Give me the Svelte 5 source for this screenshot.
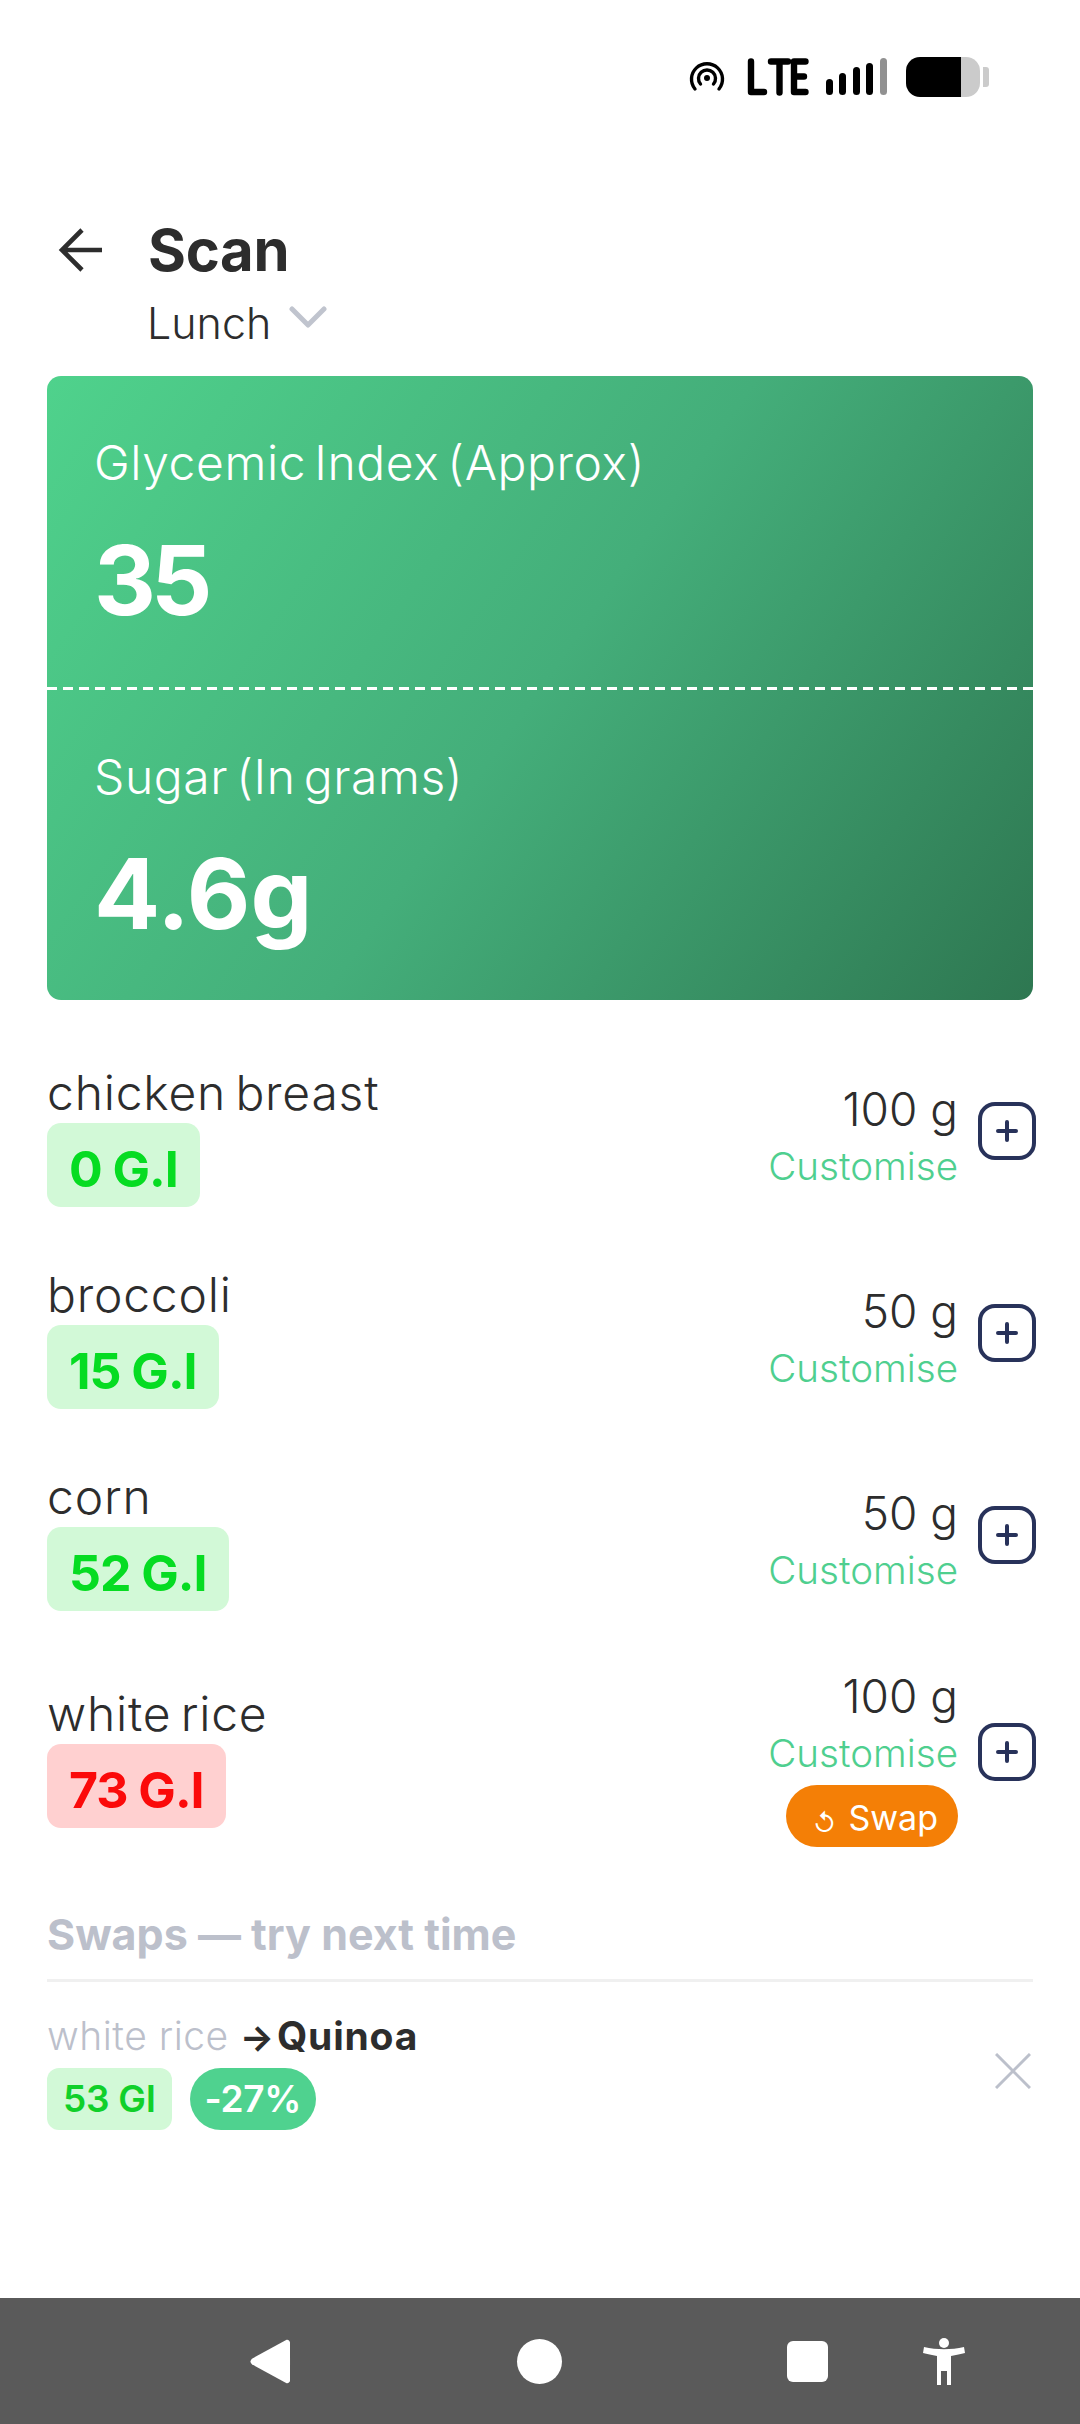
<script lang="ts">
  const foods = [
    { name: "chicken breast", gi: 0, amount: "100 g", high: false, swap: false },
    { name: "broccoli", gi: 15, amount: "50 g", high: false, swap: false },
    { name: "corn", gi: 52, amount: "50 g", high: false, swap: false },
    { name: "white rice", gi: 73, amount: "100 g", high: true, swap: true },
  ];
</script>

<div class="screen">
  <div class="status">
    <svg class="hotspot" width="36" height="32" viewBox="0 0 36 32" fill="none" stroke="#000" stroke-width="3.4" stroke-linecap="round">
      <path d="M6 28 A15.5 15.5 0 1 1 30 28" />
      <path d="M11.5 23 A8.5 8.5 0 1 1 24.5 23" />
      <circle cx="18" cy="17" r="3" fill="#000" stroke="none" />
    </svg>
    <svg class="lte" width="62" height="38" viewBox="0 0 62 38" fill="none" stroke="#000" stroke-width="6.4" stroke-linecap="round" stroke-linejoin="round">
      <path d="M4 3.5 V34 H17" />
      <path d="M24 3.5 H41 M32.5 3.5 V34.5" />
      <path d="M58.5 3.5 H47 V34 H58.5 M47 18.5 H57" />
    </svg>
    <svg class="signal" width="62" height="38" viewBox="0 0 62 38">
      <rect x="0" y="21" width="7" height="16" rx="3.5" fill="#000" />
      <rect x="13" y="15" width="7" height="22" rx="3.5" fill="#000" />
      <rect x="27" y="9" width="7" height="28" rx="3.5" fill="#000" />
      <rect x="40" y="5" width="7" height="32" rx="3.5" fill="#000" />
      <rect x="54" y="0" width="7" height="37" rx="3.5" fill="#919191" />
    </svg>
    <div class="battery">
      <div class="level"></div>
      <div class="rest"></div>
      <div class="nub"></div>
    </div>
  </div>

  <header>
    <svg class="back" width="44" height="44" viewBox="0 0 44 44" fill="none" stroke="#2d2d2d" stroke-width="4.6">
      <path d="M45 22 H4 M24 2 L4 22 L24 42" />
    </svg>
    <div class="titles">
      <h1>Scan</h1>
      <div class="meal">
        <span>Lunch</span>
        <svg width="38" height="22" viewBox="0 0 38 22" fill="none" stroke="#c0c4ce" stroke-width="5" stroke-linecap="round" stroke-linejoin="round">
          <path d="M3 3 L19 19 L35 3" />
        </svg>
      </div>
    </div>
  </header>

  <section class="card">
    <div class="stat first">
      <p>Glycemic Index (Approx)</p>
      <strong>35</strong>
    </div>
    <div class="dashes"></div>
    <div class="stat">
      <p>Sugar (In grams)</p>
      <strong>4.6g</strong>
    </div>
  </section>

  <div class="foods">
    {#each foods as food (food.name)}
      <div class="food">
        <div class="left">
          <div class="name">{food.name}</div>
          <div class="gi" class:high={food.high}>{food.gi} G.I</div>
        </div>
        <div class="right">
          <div class="amount">{food.amount}</div>
          <div class="customise">Customise</div>
          {#if food.swap}
            <div class="swap"><span class="swap-icon">↺</span> Swap</div>
          {/if}
        </div>
        <svg class="plus" width="58" height="58" viewBox="0 0 58 58" fill="none" stroke="#28325a" stroke-width="4" stroke-linecap="round">
          <rect x="2" y="2" width="54" height="54" rx="15" />
          <path d="M29 20 V38 M20 29 H38" />
        </svg>
      </div>
    {/each}
  </div>

  <section class="swaps">
    <h2>Swaps — try next time</h2>
    <div class="swap-row">
      <div>
        <div class="swap-title"><span class="from">white rice</span> <span class="arrow">→</span> <b>Quinoa</b></div>
        <div class="chips">
          <span class="chip-gi">53 GI</span>
          <span class="chip-pct">-27%</span>
        </div>
      </div>
      <svg class="close" width="36" height="36" viewBox="0 0 36 36" stroke="#bcc0cb" stroke-width="3" fill="none">
        <path d="M1 1 L35 35 M35 1 L1 35" />
      </svg>
    </div>
  </section>

  <nav>
    <svg class="nav-back" width="41" height="45" viewBox="0 0 42 48" fill="#fff" preserveAspectRatio="none">
      <path d="M37 1 C39 0 41 2 41 4 V44 C41 46 39 48 37 47 L2 27 C0 25 0 23 2 21 Z" />
    </svg>
    <div class="home"></div>
    <div class="recents"></div>
    <svg class="access" width="42" height="47" viewBox="0 0 42 47" fill="#fff">
      <circle cx="21" cy="5" r="5" />
      <path d="M1 9 C14 12 28 12 41 9 L42 15 C38 16 33 17 28 18 V47 H24 V33 H18 V47 H14 V18 C9 17 4 16 0 15 Z" />
    </svg>
  </nav>
</div>

<style>
  :global(body) {
    margin: 0;
    background: #fff;
  }

  .screen {
    width: 1080px;
    height: 2424px;
    display: flex;
    flex-direction: column;
    font-family: "Inter", "Liberation Sans", sans-serif;
    color: #2d2d2d;
    background: #fff;
    overflow: hidden;
  }

  .status {
    display: flex;
    align-items: center;
    justify-content: flex-end;
    height: 38px;
    margin-top: 58px;
    padding-right: 91px;
  }

  .hotspot {
    margin-right: 22px;
  }

  .lte {
    margin-right: 17px;
  }

  .signal {
    margin-right: 18px;
  }

  .battery {
    display: flex;
    align-items: center;
    height: 40px;
  }

  .level {
    width: 55px;
    height: 40px;
    background: #000;
    border-radius: 14px 0 0 14px;
  }

  .rest {
    width: 19px;
    height: 40px;
    background: #cbcbcb;
    border-radius: 0 14px 14px 0;
  }

  .nub {
    width: 6px;
    height: 20px;
    margin-left: 3px;
    background: #cbcbcb;
    border-radius: 0 3px 3px 0;
  }

  header {
    display: flex;
    padding: 127px 0 0 58px;
  }

  .back {
    margin-top: 5px;
    margin-right: 46px;
  }

  h1 {
    margin: 0;
    font-size: 58px;
    line-height: 54px;
    font-weight: 700;
    letter-spacing: -0.3px;
  }

  .meal {
    display: flex;
    align-items: center;
    gap: 18px;
    margin-top: 21px;
    margin-left: -1px;
    font-size: 43px;
    line-height: 50px;
    font-weight: 300;
  }

  .meal svg {
    margin-top: -12px;
  }

  .card {
    margin: 28px 47px 0;
    height: 624px;
    box-sizing: border-box;
    border-radius: 14px;
    background: linear-gradient(125deg, #4fd28c 0%, #44ae7a 50%, #2e7751 100%);
    color: #fff;
    display: flex;
    flex-direction: column;
  }

  .stat {
    flex: 1;
    padding: 60px 47px 0;
  }

  .dashes {
    height: 3px;
    flex-shrink: 0;
    background: repeating-linear-gradient(90deg, #fff 0 10.5px, transparent 10.5px 16px);
  }

  .stat p {
    margin: 0;
    font-size: 48px;
    line-height: 54px;
    font-weight: 300;
    letter-spacing: 0.6px;
    word-spacing: -6px;
  }

  .stat strong {
    display: block;
    margin-top: 40px;
    font-size: 98px;
    line-height: 100px;
    font-weight: 700;
  }

  .stat.first strong {
    font-size: 96px;
    letter-spacing: -5px;
  }

  .foods {
    padding: 67px 47px 0;
  }

  .food {
    display: flex;
    align-items: center;
    margin-bottom: 62px;
  }

  .food:last-child {
    margin-top: -5px;
  }

  .left {
    flex: 1;
  }

  .name {
    font-size: 48px;
    line-height: 52px;
    font-weight: 300;
    letter-spacing: 0.8px;
    word-spacing: -5px;
  }

  .gi {
    display: inline-block;
    margin-top: 4px;
    padding: 0 22px;
    height: 84px;
    line-height: 92px;
    border-radius: 14px;
    background: #d2f9d7;
    color: #06dc22;
    font-size: 50px;
    font-weight: 700;
    letter-spacing: -1px;
  }

  .gi.high {
    background: #ffd0d0;
    color: #fb0a0a;
  }

  .right {
    display: flex;
    flex-direction: column;
    align-items: flex-end;
    margin-right: -2px;
  }

  .amount {
    font-size: 46px;
    line-height: 57px;
    font-weight: 300;
  }

  .customise {
    font-size: 38.6px;
    line-height: 56px;
    font-weight: 300;
    color: #4fcf8f;
  }

  .swap {
    margin-top: 4px;
    height: 62px;
    line-height: 66px;
    padding: 0 0 0 27px;
    width: 172px;
    box-sizing: border-box;
    background: #f47f06;
    border-radius: 31px;
    color: #fff;
    font-size: 34px;
    font-weight: 400;
    white-space: nowrap;
  }

  .swap-icon {
    font-size: 24px;
    margin-right: 3px;
    vertical-align: -2px;
  }

  .plus {
    margin-left: 22px;
    margin-right: -3px;
    margin-bottom: 12px;
  }

  .swaps {
    padding: 0 47px;
  }

  h2 {
    margin: 0;
    padding-bottom: 20px;
    font-size: 43px;
    line-height: 50px;
    font-weight: 700;
    color: #bcc0cb;
    border-bottom: 3px solid #f0f0f0;
  }

  .swap-row {
    display: flex;
    align-items: center;
    justify-content: space-between;
    padding-top: 29px;
  }

  .swap-title {
    font-size: 39px;
    line-height: 50px;
  }

  .from {
    color: #bcc0cb;
    font-weight: 300;
    letter-spacing: 0.5px;
  }

  .arrow {
    font-size: 36px;
    font-weight: 700;
    color: #2d2d2d;
    margin-right: -8px;
  }

  .swap-title b {
    font-weight: 700;
    letter-spacing: 0.8px;
  }

  .chips {
    display: flex;
    gap: 18px;
    margin-top: 6px;
  }

  .chip-gi,
  .chip-pct {
    height: 62px;
    line-height: 62px;
    font-size: 37px;
    font-weight: 600;
    letter-spacing: -0.3px;
  }

  .chip-gi {
    padding: 0 16px;
    border-radius: 12px;
    background: #d2f9d7;
    color: #10d02a;
  }

  .chip-pct {
    padding: 0 15px;
    border-radius: 31px;
    background: #4fd28f;
    color: #fff;
  }

  .close {
    margin-right: 2px;
  }

  nav {
    margin-top: auto;
    position: relative;
    height: 126px;
    flex-shrink: 0;
    background: #5a5a5a;
  }

  nav > * {
    position: absolute;
  }

  .nav-back {
    left: 250px;
    top: 41px;
  }

  .home {
    left: 517px;
    top: 41px;
    width: 45px;
    height: 45px;
    border-radius: 50%;
    background: #fff;
  }

  .recents {
    left: 787px;
    top: 43px;
    width: 41px;
    height: 41px;
    border-radius: 6px;
    background: #fff;
  }

  .access {
    left: 923px;
    top: 40px;
  }
</style>
